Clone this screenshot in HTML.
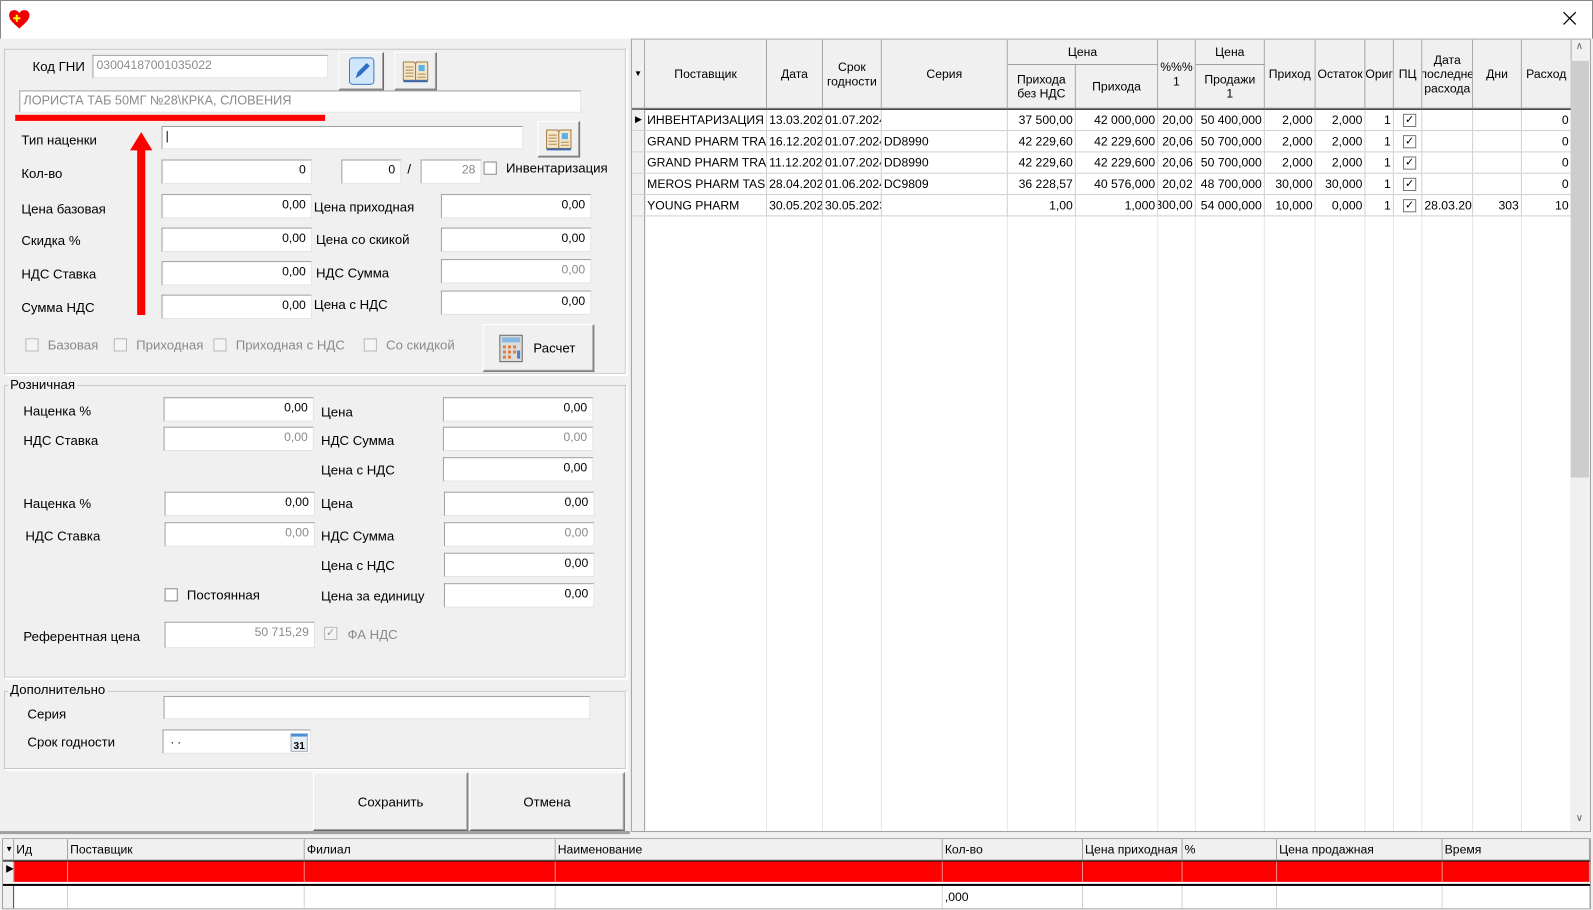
<!DOCTYPE html>
<html><head><meta charset="utf-8"><style>
*{box-sizing:border-box;margin:0;padding:0}
body{width:1593px;height:910px;position:relative;background:#f0f0f0;font-family:"Liberation Sans",sans-serif;font-size:13px;color:#000;overflow:hidden}
#w{position:absolute;left:0;top:0;width:1568px;height:896px;transform:scale(1.01595);transform-origin:0 0}
.a{position:absolute}
.l{position:absolute;white-space:nowrap;font-size:13px}
.in{position:absolute;background:#fff;border-top:1px solid #a0a0a0;border-left:1px solid #a0a0a0;border-bottom:1px solid #e3e3e3;border-right:1px solid #e3e3e3;text-align:right;padding:2px 5px 0 0;font-size:12px;white-space:nowrap;overflow:hidden}
.g{color:#8a8a8a}
.gb{position:absolute;border:1px solid #c8c8c8;border-right-color:#fff;border-bottom-color:#fff;box-shadow:inset -1px -1px 0 #c8c8c8,1px 1px 0 #fff}
.gt{position:absolute;background:#f0f0f0;padding:0 2px;font-size:13px}
.btn{position:absolute;background:#f0f0f0;border-top:1px solid #fff;border-left:1px solid #fff;border-right:1px solid #696969;border-bottom:1px solid #696969;box-shadow:inset -1px -1px 0 #a0a0a0;display:flex;align-items:center;justify-content:center;font-size:13px}
.cb{position:absolute;width:13px;height:13px;background:#fff;border:1px solid #8a8a8a}
.cbd{background:#f4f4f4;border-color:#b8b8b8}
.row{position:absolute;left:0;height:21px;border-bottom:1px solid #d0d0d0;width:100%}
.c{position:absolute;top:0;height:100%;border-right:1px solid #d0d0d0;overflow:hidden;white-space:nowrap;font-size:12px;padding:3px 2px 0 2px}
.r{text-align:right}
.h{position:absolute;border-right:1px solid #a0a0a0;border-bottom:1px solid #a0a0a0;background:#f0f0f0;font-size:12px;display:flex;align-items:center;justify-content:center;text-align:center;overflow:hidden;line-height:14px;white-space:nowrap}
</style></head><body><div id="w">
<div class="a" style="left:0;top:0;width:1568px;height:38px;background:#fff;border-left:1px solid #888;border-top:1px solid #888;border-right:1px solid #888"></div>
<svg class="a" style="left:8px;top:9px" width="22" height="20" viewBox="0 0 22 20"><path d="M11 19 C4 13 1 10 1 6 C1 3 3 1 6 1 C8 1 10 2 11 4 C12 2 14 1 16 1 C19 1 21 3 21 6 C21 10 18 13 11 19Z" fill="#e00"/><path d="M5 9h7M8.5 5.5v7" stroke="#ff0" stroke-width="2"/></svg>
<svg class="a" style="left:1538px;top:11px" width="14" height="14"><path d="M1 1L13 13M13 1L1 13" stroke="#000" stroke-width="1.2"/></svg>

<div class="gb" style="left:4px;top:48px;width:613px;height:321px"></div>
<div class="l" style="left:32px;top:58px">Код ГНИ</div>
<div class="in g" style="left:91px;top:54px;width:232px;height:23px;text-align:left;padding-left:3px">03004187001035022</div>
<div class="btn" style="left:333px;top:51px;width:45px;height:38px"><svg width="26" height="28" viewBox="0 0 26 28"><rect x="1" y="1" width="24" height="26" rx="3" fill="#cfe6fb" stroke="#3a7cc6"/><path d="M7 21l2-6 9-9 3 3-9 9z" fill="#2f6fc0"/></svg></div>
<div class="btn" style="left:388px;top:51px;width:42px;height:38px"><svg width="28" height="24" viewBox="0 0 28 24"><path d="M2 3h11l1 2 1-2h11v18H2z" fill="#f4e6c8" stroke="#a07c40"/><path d="M14 5v16" stroke="#a07c40"/><rect x="17" y="6" width="6" height="6" fill="#5ab0e8"/><path d="M4 8h8M4 11h8M4 14h8M4 17h8M16 15h8M16 18h8" stroke="#b08850"/><path d="M2 21h24v2H2z" fill="#3a6ab0"/></svg></div>
<div class="in g" style="left:19px;top:89px;width:553px;height:22px;text-align:left;padding-left:3px;font-size:12.5px">ЛОРИСТА ТАБ 50МГ №28\КРКА, СЛОВЕНИЯ</div>
<div class="a" style="left:15px;top:113px;width:305px;height:6px;background:#f00"></div>
<svg class="a" style="left:126px;top:128px" width="26" height="184"><path d="M13 2L2 20h7v162h8V20h7z" fill="#f00"/></svg>
<div class="l" style="left:21px;top:130px">Тип наценки</div>
<div class="in" style="left:159px;top:124px;width:356px;height:23px;text-align:left;padding-left:3px">|</div>
<div class="btn" style="left:529px;top:119px;width:42px;height:36px"><svg width="28" height="24" viewBox="0 0 28 24"><path d="M2 3h11l1 2 1-2h11v18H2z" fill="#f4e6c8" stroke="#a07c40"/><path d="M14 5v16" stroke="#a07c40"/><rect x="17" y="6" width="6" height="6" fill="#5ab0e8"/><path d="M4 8h8M4 11h8M4 14h8M4 17h8M16 15h8M16 18h8" stroke="#b08850"/><path d="M2 21h24v2H2z" fill="#3a6ab0"/></svg></div>
<div class="l" style="left:21px;top:163px">Кол-во</div>
<div class="in" style="left:159px;top:157px;width:148px;height:24px">0</div>
<div class="l" style="left:343px;top:160px;font-size:11px">+</div>
<div class="in" style="left:336px;top:157px;width:59px;height:24px">0</div>
<div class="l" style="left:401px;top:159px">/</div>
<div class="in g" style="left:414px;top:157px;width:60px;height:24px">28</div>
<div class="cb" style="left:476px;top:159px"></div>
<div class="l" style="left:498px;top:158px">Инвентаризация</div>

<div class="l" style="left:21px;top:198px">Цена базовая</div>
<div class="in" style="left:159px;top:191px;width:148px;height:24px">0,00</div>
<div class="l" style="left:309px;top:196px">Цена приходная</div>
<div class="in" style="left:434px;top:191px;width:148px;height:24px">0,00</div>
<div class="l" style="left:21px;top:229px">Скидка %</div>
<div class="in" style="left:159px;top:224px;width:148px;height:24px">0,00</div>
<div class="l" style="left:311px;top:228px">Цена со скикой</div>
<div class="in" style="left:434px;top:224px;width:148px;height:24px">0,00</div>
<div class="l" style="left:21px;top:262px">НДС Ставка</div>
<div class="in" style="left:159px;top:257px;width:148px;height:24px">0,00</div>
<div class="l" style="left:311px;top:261px">НДС Сумма</div>
<div class="in g" style="left:434px;top:255px;width:148px;height:24px">0,00</div>
<div class="l" style="left:21px;top:295px">Сумма НДС</div>
<div class="in" style="left:159px;top:290px;width:148px;height:24px">0,00</div>
<div class="l" style="left:309px;top:292px">Цена с НДС</div>
<div class="in" style="left:434px;top:286px;width:148px;height:24px">0,00</div>

<div class="cb cbd" style="left:25px;top:333px"></div><div class="l g" style="left:47px;top:332px">Базовая</div>
<div class="cb cbd" style="left:112px;top:333px"></div><div class="l g" style="left:134px;top:332px">Приходная</div>
<div class="cb cbd" style="left:210px;top:333px"></div><div class="l g" style="left:232px;top:332px">Приходная с НДС</div>
<div class="cb cbd" style="left:358px;top:333px"></div><div class="l g" style="left:380px;top:332px">Со скидкой</div>
<div class="btn" style="left:475px;top:319px;width:110px;height:47px;justify-content:flex-start;padding-left:15px"><svg width="24" height="28" viewBox="0 0 24 28"><rect x="1" y="1" width="22" height="26" fill="#ddd" stroke="#666"/><rect x="3" y="3" width="18" height="5" fill="#8ab8e0"/><g fill="#e08040"><rect x="4" y="11" width="3" height="3"/><rect x="9" y="11" width="3" height="3"/><rect x="14" y="11" width="3" height="3"/><rect x="4" y="16" width="3" height="3"/><rect x="9" y="16" width="3" height="3"/><rect x="14" y="16" width="3" height="3"/><rect x="4" y="21" width="3" height="3"/><rect x="9" y="21" width="3" height="3"/></g><rect x="18" y="16" width="3" height="8" fill="#4a80c0"/></svg><span style="margin-left:10px">Расчет</span></div>

<div class="gb" style="left:4px;top:379px;width:613px;height:289px"></div>
<div class="gt" style="left:8px;top:371px">Розничная</div>
<div class="l" style="left:23px;top:397px">Наценка %</div>
<div class="in" style="left:161px;top:391px;width:148px;height:24px">0,00</div>
<div class="l" style="left:316px;top:398px">Цена</div>
<div class="in" style="left:436px;top:391px;width:148px;height:24px">0,00</div>
<div class="l" style="left:23px;top:426px">НДС Ставка</div>
<div class="in g" style="left:161px;top:420px;width:148px;height:24px">0,00</div>
<div class="l" style="left:316px;top:426px">НДС Сумма</div>
<div class="in g" style="left:436px;top:420px;width:148px;height:24px">0,00</div>
<div class="l" style="left:316px;top:455px">Цена с НДС</div>
<div class="in" style="left:436px;top:450px;width:148px;height:24px">0,00</div>
<div class="l" style="left:23px;top:488px">Наценка %</div>
<div class="in" style="left:162px;top:484px;width:148px;height:24px">0,00</div>
<div class="l" style="left:316px;top:488px">Цена</div>
<div class="in" style="left:437px;top:484px;width:148px;height:24px">0,00</div>
<div class="l" style="left:25px;top:520px">НДС Ставка</div>
<div class="in g" style="left:162px;top:514px;width:148px;height:24px">0,00</div>
<div class="l" style="left:316px;top:520px">НДС Сумма</div>
<div class="in g" style="left:437px;top:514px;width:148px;height:24px">0,00</div>
<div class="l" style="left:316px;top:549px">Цена с НДС</div>
<div class="in" style="left:437px;top:544px;width:148px;height:24px">0,00</div>
<div class="cb" style="left:162px;top:579px"></div><div class="l" style="left:184px;top:578px">Постоянная</div>
<div class="l" style="left:316px;top:579px">Цена за единицу</div>
<div class="in" style="left:437px;top:574px;width:148px;height:24px">0,00</div>
<div class="l" style="left:23px;top:619px">Референтная цена</div>
<div class="in g" style="left:162px;top:612px;width:148px;height:26px">50 715,29</div>
<div class="cb cbd" style="left:319px;top:617px;color:#999;font-size:11px;line-height:11px;text-align:center">✓</div>
<div class="l g" style="left:342px;top:617px">ФА НДС</div>

<div class="gb" style="left:4px;top:680px;width:613px;height:78px"></div>
<div class="gt" style="left:8px;top:671px">Дополнительно</div>
<div class="l" style="left:27px;top:695px">Серия</div>
<div class="in" style="left:161px;top:685px;width:420px;height:23px"></div>
<div class="l" style="left:27px;top:723px">Срок годности</div>
<div class="in" style="left:160px;top:718px;width:146px;height:24px;text-align:left;padding-left:7px">. .</div>
<div class="a" style="left:286px;top:722px;width:17px;height:18px;background:#e8eef6;border:1px solid #aab;font-size:10px;font-weight:bold;text-align:center;line-height:19px;border-top:3px solid #4a90d8">31</div>

<div class="btn" style="left:308px;top:760px;width:153px;height:58px">Сохранить</div>
<div class="btn" style="left:462px;top:760px;width:153px;height:58px">Отмена</div>
<div class="a" style="left:0;top:818px;width:620px;height:3px;background:#a0a0a0"></div>

<div class="a" style="left:621px;top:38px;width:945px;height:781px;background:#fff;border:1px solid #a0a0a0"></div>
<div class="a" style="left:622px;top:39px;width:925px;height:779px;overflow:hidden">
 <div class="h" style="left:0;top:0;width:13px;height:68px;font-size:8px">▼</div>
 <div class="h" style="left:13px;top:0;width:120px;height:68px">Поставщик</div>
 <div class="h" style="left:133px;top:0;width:55px;height:68px">Дата</div>
 <div class="h" style="left:188px;top:0;width:58px;height:68px">Срок<br>годности</div>
 <div class="h" style="left:246px;top:0;width:124px;height:68px">Серия</div>
 <div class="h" style="left:370px;top:0;width:148px;height:25px">Цена</div>
 <div class="h" style="left:370px;top:25px;width:67px;height:43px">Прихода<br>без НДС</div>
 <div class="h" style="left:437px;top:25px;width:81px;height:43px">Прихода</div>
 <div class="h" style="left:518px;top:0;width:37px;height:68px">%%%<br>1</div>
 <div class="h" style="left:555px;top:0;width:68px;height:25px">Цена</div>
 <div class="h" style="left:555px;top:25px;width:68px;height:43px">Продажи<br>1</div>
 <div class="h" style="left:623px;top:0;width:50px;height:68px">Приход</div>
 <div class="h" style="left:673px;top:0;width:49px;height:68px">Остаток</div>
 <div class="h" style="left:722px;top:0;width:28px;height:68px">Ориг</div>
 <div class="h" style="left:750px;top:0;width:28px;height:68px">ПЦ</div>
 <div class="h" style="left:778px;top:0;width:50px;height:68px">Дата<br>последне<br>расхода</div>
 <div class="h" style="left:828px;top:0;width:48px;height:68px">Дни</div>
 <div class="h" style="left:876px;top:0;width:49px;height:68px">Расход</div>
 <div class="a" style="left:0;top:68px;width:925px;height:1px;background:#000"></div>
 <div class="a" style="left:0;top:69px;width:925px;height:710px">
  <div class="a" style="left:0;top:0;width:13px;height:710px;background:#f0f0f0;border-right:1px solid #a0a0a0"></div>
 </div>
 <div id="rows" class="a" style="left:0;top:69px;width:925px"></div>
</div>
<div class="a" style="left:1547px;top:39px;width:18px;height:779px;background:#f0f0f0"></div>
<div class="a" style="left:1551px;top:40px;font-size:10px;color:#606060">∧</div>
<div class="a" style="left:1546px;top:60px;width:18px;height:410px;background:#cdcdcd"></div>
<div class="a" style="left:1551px;top:800px;font-size:10px;color:#606060">∨</div>

<div class="a" style="left:2px;top:825px;width:1564px;height:70px;background:#fff;border:1px solid #a0a0a0"></div>
<div id="bot" class="a" style="left:3px;top:826px;width:1562px;height:68px"></div>
</div>
<script>
var rows=[
["▶","ИНВЕНТАРИЗАЦИЯ","13.03.2023","01.07.2024","","37 500,00","42 000,000","20,00","50 400,000","2,000","2,000","1","✓","","","0"],
["","GRAND PHARM TRADE","16.12.2022","01.07.2024","DD8990","42 229,60","42 229,600","20,06","50 700,000","2,000","2,000","1","✓","","","0"],
["","GRAND PHARM TRADE","11.12.2022","01.07.2024","DD8990","42 229,60","42 229,600","20,06","50 700,000","2,000","2,000","1","✓","","","0"],
["","MEROS PHARM TASH","28.04.2022","01.06.2024","DC9809","36 228,57","40 576,000","20,02","48 700,000","30,000","30,000","1","✓","","","0"],
["","YOUNG PHARM","30.05.2021","30.05.2023","","1,00","1,000","5300,00","54 000,000","10,000","0,000","1","✓","28.03.2023","303","10"]];
var X=[0,13,133,188,246,370,437,518,555,623,673,722,750,778,828,876,925];
var R=[0,0,0,0,0,1,1,1,1,1,1,1,0,0,1,1];
var h='';
rows.forEach(function(r,i){h+='<div class="row" style="top:'+(i*21)+'px">';
for(var j=0;j<16;j++){var st='left:'+X[j]+'px;width:'+(X[j+1]-X[j])+'px;';
if(j==0)st+='background:#f0f0f0;border-right:1px solid #a0a0a0;font-size:9px;padding:4px 0 0 3px;';
var t=r[j];
if(j==7&&i==4)st+='text-indent:-12px;';
if(j==12){h+='<div class="c" style="'+st+'"><div style="width:13px;height:13px;border:1px solid #777;margin:1px 0 0 7px;font-size:11px;line-height:11px;text-align:center">✓</div></div>';continue;}
h+='<div class="c'+(R[j]?' r':'')+'" style="'+st+'">'+t+'</div>';}
h+='</div>';});
h+='<div class="row" style="top:105px;height:605px;border:none">';for(var j=1;j<16;j++)h+='<div class="c" style="left:'+X[j]+'px;width:'+(X[j+1]-X[j])+'px;border-right-color:#e6e6e6"></div>';h+='</div>';
document.getElementById('rows').innerHTML=h;
var B=[0,11,64,297,544,925,1063,1161,1254,1417,1562];
var N=["▼","Ид","Поставщик","Филиал","Наименование","Кол-во","Цена приходная","%","Цена продажная","Время"];
var b='';
for(var j=0;j<10;j++){var l=B[j],w=B[j+1]-B[j];
b+='<div class="h" style="left:'+l+'px;top:0;width:'+w+'px;height:21px;justify-content:flex-start;padding-left:2px;'+(j==0?'font-size:8px;':'')+'">'+N[j]+'</div>';
b+='<div class="a" style="left:'+l+'px;top:22px;width:'+w+'px;height:20px;background:'+(j==0?'#f0f0f0':'#f00')+';border-right:1px solid '+(j==0?'#a0a0a0':'#f88')+';font-size:10px;padding:2px 0 0 3px">'+(j==0?'▶':'')+'</div>';
b+='<div class="a" style="left:'+l+'px;top:46px;width:'+w+'px;height:22px;background:'+(j==0?'#f0f0f0':'#fff')+';border-right:1px solid '+(j==0?'#333':'#d0d0d0')+';font-size:12px;padding:4px 0 0 2px">'+(j==5?',000':'')+'</div>';}
b+='<div class="a" style="left:0;top:44px;width:1562px;height:2px;background:#000"></div>';
b+='<div class="a" style="left:0;top:21px;width:1562px;height:1px;background:#000"></div>';
document.getElementById('bot').innerHTML=b;
</script>
</body></html>
